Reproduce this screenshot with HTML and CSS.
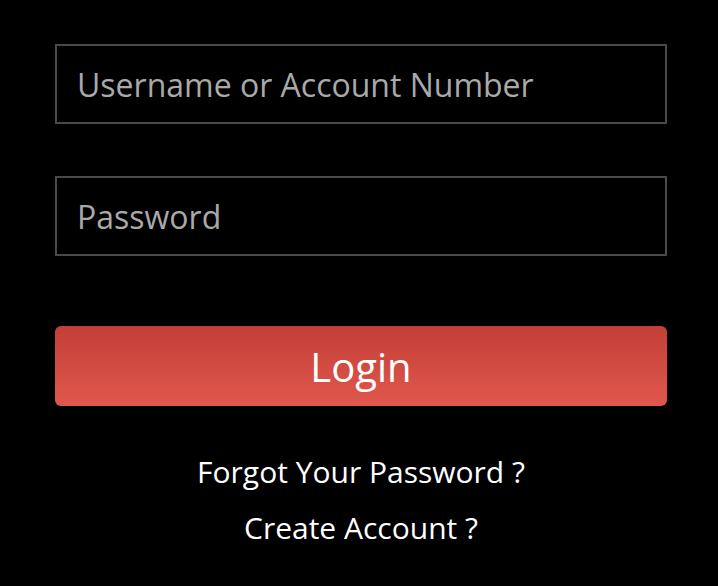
FILE: index.html
```html
<!DOCTYPE html>
<html>
<head>
<meta charset="utf-8">
<link rel="stylesheet" href="styles.css">
</head>
<body>
<form class="login">
  <input class="field" type="text" placeholder="Username or Account Number">
  <input class="field field-pass" type="password" placeholder="Password">
  <button class="btn" type="button">Login</button>
  <div class="links">
    <a class="link" href="#">Forgot Your Password ?</a>
    <a class="link" href="#">Create Account ?</a>
  </div>
</form>
</body>
</html>
```
FILE: styles.css
```css
html, body {
  margin: 0;
  background: #000;
  height: 100%;
}
.login {
  display: flex;
  flex-direction: column;
  width: 612px;
  margin: 0 0 0 55px;
  padding-top: 44px;
  font-family: "Open Sans", "Liberation Sans", sans-serif;
}
.field {
  box-sizing: border-box;
  height: 80px;
  width: 100%;
  background: #000;
  border: 2px solid #4a4a4a;
  padding: 0 20px;
  font-family: inherit;
  font-size: 32px;
  color: #fff;
  outline: none;
}
.field::placeholder {
  color: #a9a9a9;
}
.field-pass {
  margin-top: 52px;
}
.btn {
  margin-top: 70px;
  height: 80px;
  border: none;
  border-radius: 6px;
  background: linear-gradient(#c23f37, #e1574d);
  color: #fff;
  font-family: inherit;
  font-size: 40px;
  padding: 0;
}
.links {
  display: flex;
  flex-direction: column;
  align-items: center;
  margin-top: 46px;
  gap: 16px;
}
.link {
  color: #fff;
  text-decoration: none;
  font-size: 30px;
  line-height: 40px;
}
```
